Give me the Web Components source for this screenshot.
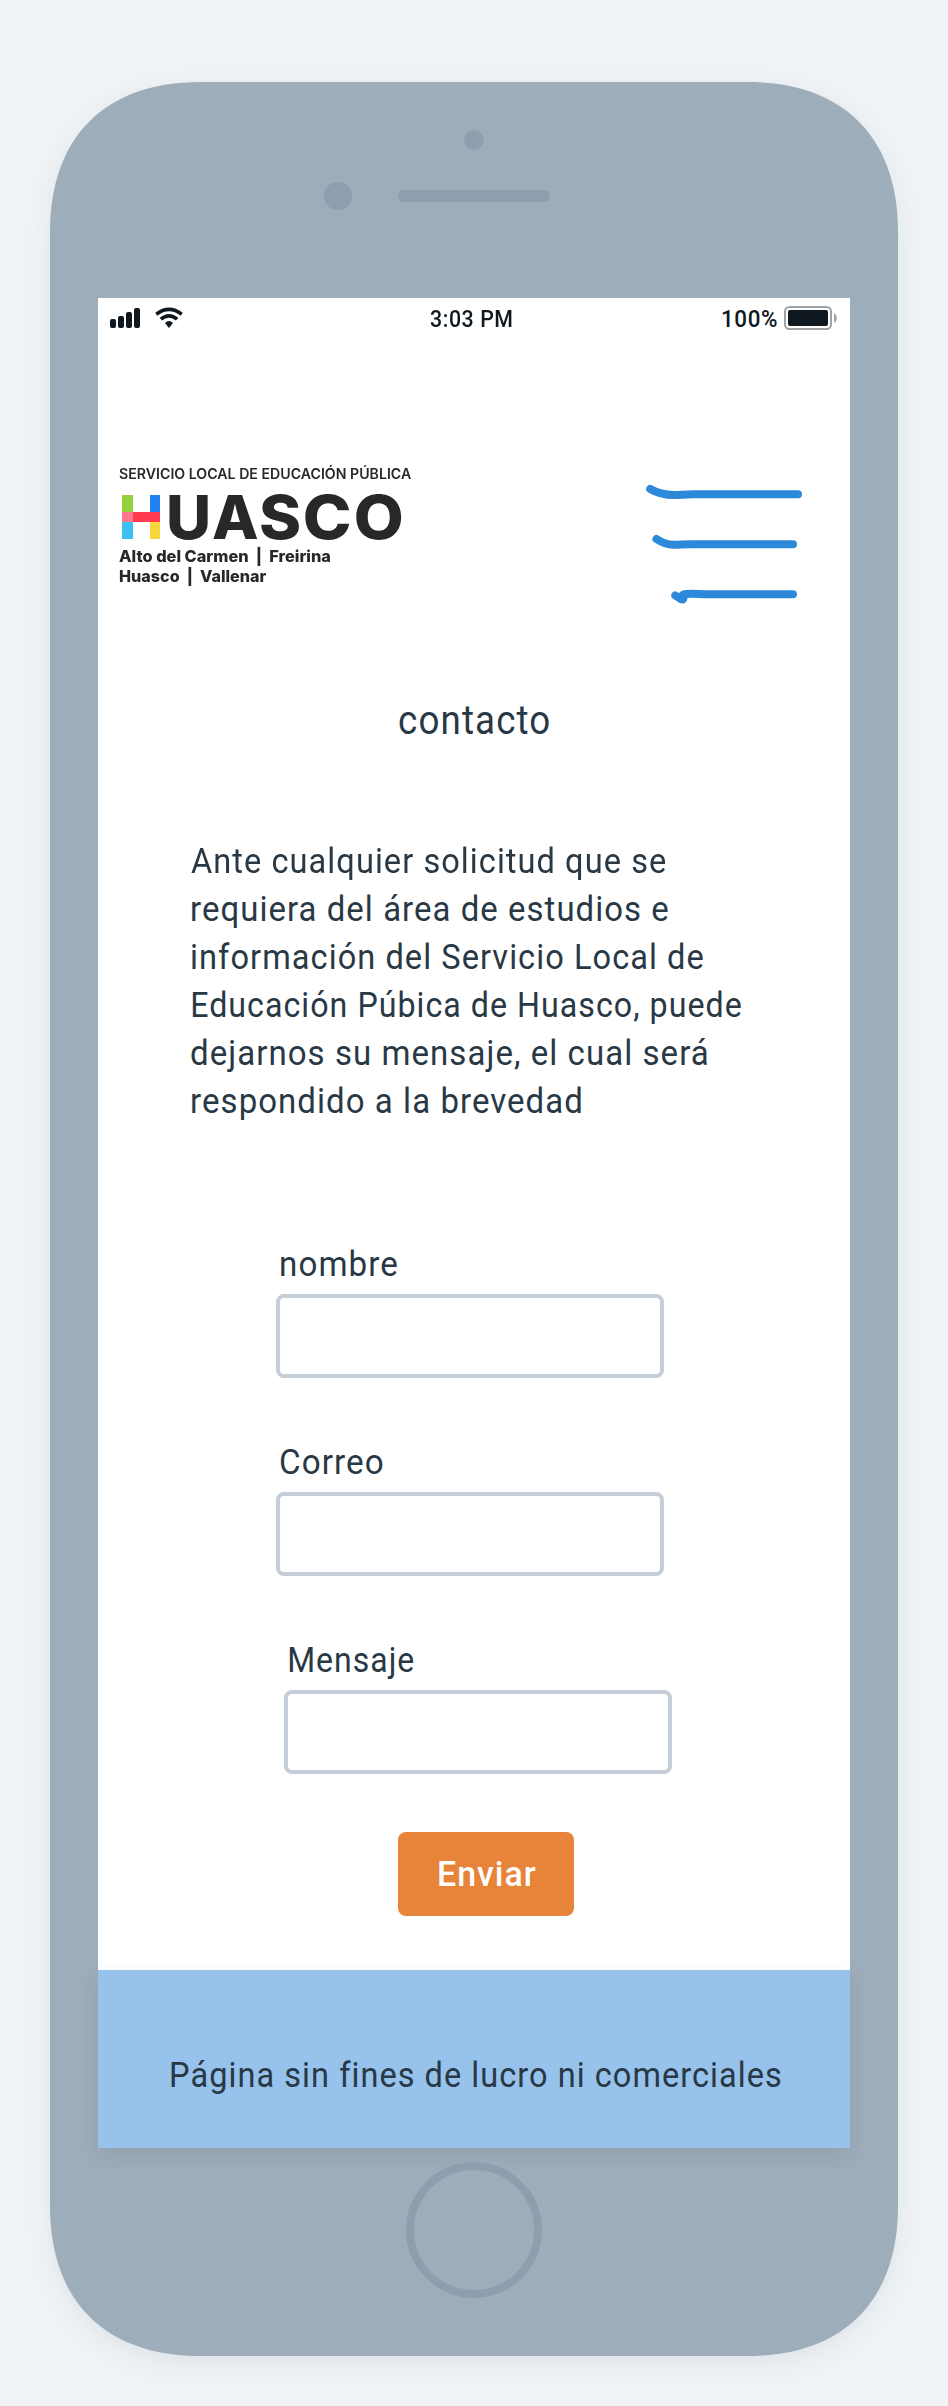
<!DOCTYPE html>
<html lang="es">
<head>
<meta charset="utf-8">
<title>Contacto</title>
<style>
html,body{margin:0;background:#eff3f6}
body{display:flex;justify-content:center;height:2406px;font-family:Roboto,sans-serif;color:#293845}
</style>
</head>
<body>
<phone-frame>
  <status-bar></status-bar>
  <app-header></app-header>
  <contact-copy></contact-copy>
  <form-field label="nombre" w="116.5" style="margin-top:115px"></form-field>
  <form-field label="Correo" w="102" style="margin-top:60px"></form-field>
  <form-field label="Mensaje" w="125" style="margin-top:60px;margin-left:186px"></form-field>
  <send-button></send-button>
  <page-footer></page-footer>
</phone-frame>
<script>
const ctx = document.createElement('canvas').getContext('2d');
const define = (name, html, init) => customElements.define(name, class extends HTMLElement {
  connectedCallback() {
    if (this.shadowRoot) return;
    const t = document.createElement('template');
    t.innerHTML = html;
    this.attachShadow({mode: 'open'}).append(t.content.cloneNode(true));
    if (init) init.call(this, this.shadowRoot);
  }
});

/* One line of text whose ink fills exactly the width given in "w". */
define('fit-text', `<style>
:host{display:block;white-space:nowrap}
span{display:inline-block;transform-origin:0 50%;vertical-align:top}
</style><span></span>`, function (root) {
  const span = root.querySelector('span'), w = +this.getAttribute('w'), s = getComputedStyle(this);
  span.textContent = this.getAttribute('text');
  this.style.width = w + 'px';
  ctx.font = `${s.fontWeight} ${s.fontSize} ${s.fontFamily}`;
  ctx.letterSpacing = s.letterSpacing === 'normal' ? '0px' : s.letterSpacing;
  const m = ctx.measureText(span.textContent);
  const k = w / (m.actualBoundingBoxLeft + m.actualBoundingBoxRight);
  span.style.transform = `translateX(${m.actualBoundingBoxLeft * k}px) scaleX(${k})`;
});

define('phone-frame', `<style>
:host{display:grid;width:848px;height:2274px;margin-top:82px}
.shell,.body{grid-area:1/1}
.shell{display:block;overflow:visible;filter:drop-shadow(0 8px 12px rgba(20,30,40,.065))}
.body{display:flex;flex-direction:column;align-items:center;z-index:1}
.top{height:216px;width:100%;display:grid;grid-template-columns:274px 28px 46px 152px 1fr;grid-template-rows:48px 20px 32px 28px;align-items:center;box-sizing:border-box}
i{display:block;background:#8e9eae;border-radius:14px}
.cam{grid-area:2/4;width:20px;height:20px;justify-self:center}
.sensor{grid-area:4/2;width:28px;height:28px}
.speaker{grid-area:4/4;height:12px}
.screen{width:752px;height:1850px;background:#fff;display:flex;flex-direction:column}
.home{box-sizing:border-box;width:136px;height:136px;border:8px solid #8e9eae;border-radius:50%;margin-top:14px}
</style>
<svg class="shell" width="848" height="2274"><path fill="#9eadba" d="M150 0H698C793 0 848 55 848 150V2124C848 2219 793 2274 698 2274H150C55 2274 0 2219 0 2124V150C0 55 55 0 150 0Z"/></svg>
<div class="body"><div class="top"><i class="cam"></i><i class="sensor"></i><i class="speaker"></i></div>
<div class="screen"><slot></slot></div><div class="home"></div></div>`);

define('status-bar', `<style>
:host{display:flex;height:40px;color:#10181f;align-items:flex-start;font-size:23px;font-weight:500;line-height:32px;letter-spacing:.6px}
svg{display:block;flex:none}
</style>
<svg width="90" height="40" fill="#10181f"><rect x="12" y="21" width="6" height="9" rx="2"/><rect x="20" y="18" width="6" height="12" rx="2"/><rect x="28" y="14" width="6" height="16" rx="2"/><rect x="36" y="10" width="6" height="20" rx="2"/>
<g fill="none" stroke="#10181f" stroke-width="3.6"><path d="M58.3 16.2Q71 6.5 83.7 16.2"/><path d="M62.8 21.2Q71 14.4 79.2 21.2"/></g><path d="M67 25Q71 21.2 75 25L71 30Z"/></svg>
<fit-text text="3:03 PM" w="82" style="margin:5.5px 0 0 242px"></fit-text>
<fit-text text="100%" w="54.5" style="margin:5.5px 0 0 210px"></fit-text>
<svg width="60" height="40" style="margin-left:7.5px"><rect x="1" y="9" width="46" height="22" rx="4.5" fill="none" stroke="#9fa3a6" stroke-width="2"/><rect x="4" y="12" width="40" height="16" rx="2" fill="#10181f"/><path d="M50 15Q53 17 53 20T50 25Z" fill="#9fa3a6"/></svg>`);

define('brand-logo', `<style>
:host{display:block;width:300px;font-family:Inter,sans-serif;color:#282828}
.word{display:flex;height:44px;margin:13px 0 0 3px;font-size:60.5px;font-weight:800;line-height:44px}
</style>
<fit-text text="SERVICIO LOCAL DE EDUCACIÓN PÚBLICA" w="292" style="font-size:14px;font-weight:600;line-height:16px"></fit-text>
<div class="word"><svg width="38" height="44"><path fill="#94d13d" d="M0 0h11v17H0z"/><path fill="#1f83f0" d="M28 0h10v17H28z"/><path fill="#3dbff2" d="M0 27h11v17H0z"/><path fill="#fad63d" d="M28 27h10v17H28z"/><path fill="#ff3b50" d="M11 17h27v10H11z"/><path fill="#ff788b" d="M0 17h11v10H0z"/></svg>
<fit-text text="U" w="39" style="margin-left:9px"></fit-text><fit-text text="A" w="45" style="margin-left:5px"></fit-text><fit-text text="S" w="38" style="margin-left:3px"></fit-text><fit-text text="C" w="44.5" style="margin-left:6px"></fit-text><fit-text text="O" w="46" style="margin-left:6.5px"></fit-text></div>
<fit-text text="Alto del Carmen&nbsp; |&nbsp; Freirina" w="211.5" style="font-size:16px;font-weight:800;line-height:20px;margin-top:7px"></fit-text>
<fit-text text="Huasco&nbsp; |&nbsp; Vallenar" w="147.5" style="font-size:16px;font-weight:800;line-height:20px;margin-top:-.5px"></fit-text>`);

define('menu-icon', `<style>:host{display:block}svg{display:block}</style>
<svg width="170" height="130" viewBox="640 480 170 130" fill="none" stroke="#2c88d9" stroke-width="8" stroke-linecap="round" stroke-linejoin="round"><path d="M650.2 489C657 493 663 495 674 495C681 495 683 494.2 694 494.2H798"/><path d="M656.5 539C661 542 666 545 674 544.8C681 544.8 682 544.3 690 544.3H793"/><path d="M675.3 595.5L681 599.2C683.5 600 684 598 683 596C681 594.5 684 593.7 692 593.7C698 593.7 700 594.3 707 594.3H793"/></svg>`);

define('app-header', `<style>:host{display:flex;justify-content:space-between;height:320px;box-sizing:border-box;padding:128px 40px 0 21px}
menu-icon{margin-top:14px}</style><brand-logo></brand-logo><menu-icon></menu-icon>`);

define('contact-copy', `<style>
:host{display:block}
h1{margin:0;font-size:40px;font-weight:400;line-height:56px;letter-spacing:1.2px}
h1 fit-text{margin:35px 0 0 301px}
p{margin:88px 0 0 93.5px;font-size:34.5px;line-height:48px;letter-spacing:1.1px}
</style><h1><fit-text text="contacto" w="150.5"></fit-text></h1>
<p><fit-text text="Ante cualquier solicitud que se" w="475" style="margin-left:-1px"></fit-text><fit-text text="requiera del área de estudios e" w="476.5"></fit-text><fit-text text="información del Servicio Local de" w="511.5"></fit-text><fit-text text="Educación Púbica de Huasco, puede" w="549.5"></fit-text><fit-text text="dejarnos su mensaje, el cual será" w="516" style="margin-left:-1px"></fit-text><fit-text text="respondido a la brevedad" w="388.5"></fit-text></p>`);

define('form-field', `<style>
:host{display:block;margin-left:178px;width:388px}
label{display:block;font-size:34.5px;line-height:48px;letter-spacing:1.1px;padding-left:4.5px}
input{display:block;box-sizing:border-box;width:388px;height:84px;margin:6px 0 0;border:4px solid #c4cdd8;border-radius:8px;background:#fff;outline:0}
</style><label></label><input>`, function (root) {
  const line = document.createElement('fit-text');
  line.setAttribute('text', this.getAttribute('label'));
  line.setAttribute('w', this.getAttribute('w'));
  root.querySelector('label').append(line);
});

define('send-button', `<style>
:host{display:block;margin:58px 0 0 300px}
button{display:block;width:176px;height:84px;padding:0 0 0 41px;border:0;border-radius:8px;background:#e8833a;color:#fff;font:500 34.5px/48px Roboto,sans-serif;letter-spacing:1px;text-align:left}
</style><button><fit-text text="Enviar" w="96.5"></fit-text></button>`);

define('page-footer', `<style>
:host{display:block;box-sizing:border-box;height:178px;margin-top:auto;padding:81px 0 0 72.5px;background:#96c2eb;box-shadow:0 6px 20px rgba(30,30,40,.09);font-size:34.5px;line-height:48px;letter-spacing:1.1px}
</style><fit-text text="Página sin fines de lucro ni comerciales" w="610"></fit-text>`);
</script>
</body>
</html>
